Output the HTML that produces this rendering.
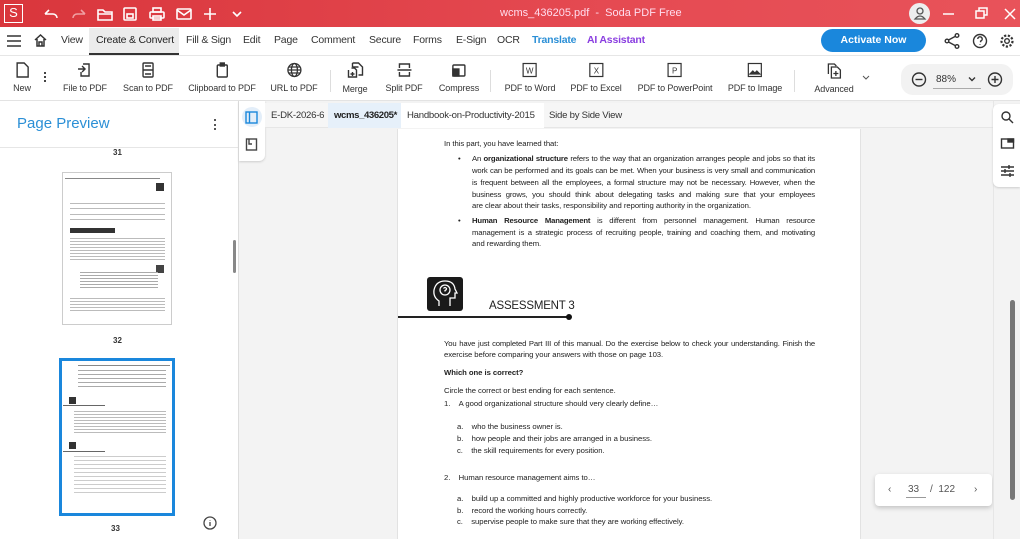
<!DOCTYPE html>
<html><head><meta charset="utf-8"><style>
*{margin:0;padding:0;box-sizing:border-box}
body{width:1020px;height:539px;overflow:hidden;font-family:"Liberation Sans",sans-serif;background:#fff;position:relative;color:#333}
.a{position:absolute}
.tb{left:0;top:0;width:1020px;height:27px;background:linear-gradient(90deg,#d9363c,#e54a52 60%,#e8535a)}
.menu span{position:absolute;top:34px;font-size:10.5px;color:#333;letter-spacing:-0.2px}
.tool{position:absolute;top:62px;text-align:center;font-size:9px;color:#333;transform:translateX(-50%);white-space:nowrap;letter-spacing:-0.1px}
.tool svg{display:block;margin:0 auto 5px}
.pt{position:absolute;font-family:"Liberation Sans",sans-serif;font-size:7.7px;color:#222;white-space:nowrap;letter-spacing:-0.05px}
.j{text-align:justify;text-align-last:justify;white-space:normal;letter-spacing:-0.15px}
.g{position:absolute;background:#bbb;height:1px}
.tab{position:absolute;top:110px;font-size:9.6px;color:#333;letter-spacing:-0.25px;white-space:nowrap}
</style></head><body>
<div class="a tb"></div>
<div class="a" style="left:4px;top:4px;width:19px;height:19px;border:1.5px solid #fff;color:#fff;font-size:13px;text-align:center;line-height:16px">S</div>
<svg class="a" style="left:42px;top:6px" width="210" height="16" fill="none" stroke="#fff" stroke-width="1.6">
<path d="M3 8 L7 4 M3 8 h8 a4 4 0 0 1 4 4"/>
<path d="M43 8 L39 4 M43 8 h-8 a4 4 0 0 0 -4 4" stroke="#f0a0a3"/>
<path d="M56 4 h5 l2 2 h7 v8 h-14 z M56 8 h14"/>
<rect x="82" y="2" width="12" height="12" rx="1"/><rect x="85" y="8" width="6" height="4"/>
<rect x="108" y="6" width="14" height="6" rx="1"/><rect x="111" y="2" width="8" height="4"/><rect x="111" y="10" width="8" height="4"/>
<rect x="135" y="3" width="14" height="10" rx="1"/><path d="M135 4 l7 5 l7 -5"/>
<path d="M168 2 v12 M162 8 h12"/>
<path d="M191 6 l4 4 l4 -4"/>
</svg>
<div class="a" style="left:500px;top:7px;font-size:11px;color:#fde">wcms_436205.pdf &nbsp;- &nbsp;Soda PDF Free</div>
<div class="a" style="left:909px;top:3px;width:21px;height:21px;border-radius:50%;background:#eee"></div>
<svg class="a" style="left:913px;top:6px" width="14" height="14" fill="none" stroke="#555" stroke-width="1.3"><circle cx="7" cy="5" r="3"/><path d="M2 13 q5 -6 10 0 z"/></svg>
<svg class="a" style="left:940px;top:6px" width="80" height="16" fill="none" stroke="#fff" stroke-width="1.5"><path d="M3 8 h11"/><rect x="36" y="5" width="8" height="7"/><path d="M39 5 v-3 h8 v7 h-3"/><path d="M65 3 l10 10 M75 3 l-10 10"/></svg>
<div class="menu">
<svg class="a" style="left:7px;top:35px" width="14" height="12" stroke="#333" stroke-width="1.5"><path d="M0 1h14M0 6h14M0 11h14"/></svg>
<svg class="a" style="left:33px;top:33px" width="15" height="15" fill="none" stroke="#333" stroke-width="1.5"><path d="M2 7 L7.5 2 L13 7 M4 6 v7 h7 v-7 M6 13 v-4 h3 v4"/></svg>
<span style="left:61px">View</span>
<div class="a" style="left:89px;top:28px;width:90px;height:27px;background:#ececec;border-bottom:2px solid #333"></div>
<span style="left:96px;color:#222">Create &amp; Convert</span>
<span style="left:186px">Fill &amp; Sign</span><span style="left:243px">Edit</span><span style="left:274px">Page</span>
<span style="left:311px">Comment</span><span style="left:369px">Secure</span><span style="left:413px">Forms</span>
<span style="left:456px">E-Sign</span><span style="left:497px">OCR</span>
<span style="left:532px;color:#2b8fd6;font-weight:bold">Translate</span>
<span style="left:587px;color:#8a3ee0;font-weight:bold">AI Assistant</span>
</div>
<div class="a" style="left:821px;top:29px;width:105px;height:23px;border-radius:12px;background:#1a87dc;color:#fff;font-size:10.5px;font-weight:bold;text-align:center;line-height:23px">Activate Now</div>
<svg class="a" style="left:944px;top:33px" width="75" height="16" fill="none" stroke="#333" stroke-width="1.4">
<circle cx="13" cy="2.5" r="1.8"/><circle cx="3" cy="8" r="1.8"/><circle cx="13" cy="13.5" r="1.8"/><path d="M4.5 7 L11.5 3.3 M4.5 9 L11.5 12.7"/>
<circle cx="36" cy="8" r="6.5"/><path d="M33.8 6 a2.2 2.2 0 1 1 2.8 2.1 v1.2 M36 11.3 v.6"/>
<circle cx="63" cy="8" r="2.3"/><circle cx="63" cy="8" r="5.5" stroke-dasharray="2.2 1.6" stroke-width="2.2"/>
</svg>
<div class="a" style="left:0;top:55px;width:1020px;height:1px;background:#e6e6e6"></div>
<div class="tool" style="left:22px"><svg width="14" height="16" fill="none" stroke="#333" stroke-width="1.4"><path d="M2 1h7l4 4v10H2z"/></svg>New</div>
<div class="a" style="left:44px;top:72px;width:2px;height:10px;border-left:2px dotted #444"></div>
<div class="tool" style="left:85px"><svg width="16" height="16" fill="none" stroke="#333" stroke-width="1.4"><path d="M6 2h6v12H4v-4M1 7h7M5 4l3 3-3 3"/></svg>File to PDF</div>
<div class="tool" style="left:148px"><svg width="16" height="16" fill="none" stroke="#333" stroke-width="1.4"><rect x="3" y="1" width="10" height="14" rx="1"/><path d="M3 8h10M5 4h6M5 12h6"/></svg>Scan to PDF</div>
<div class="tool" style="left:222px"><svg width="16" height="16" fill="none" stroke="#333" stroke-width="1.4"><rect x="3" y="3" width="10" height="12" rx="1"/><rect x="6" y="1" width="4" height="3" fill="#333"/></svg>Clipboard to PDF</div>
<div class="tool" style="left:294px"><svg width="16" height="16" fill="none" stroke="#333" stroke-width="1.3"><circle cx="8" cy="8" r="6.5"/><ellipse cx="8" cy="8" rx="3" ry="6.5"/><path d="M1.5 8h13M2.5 5h11M2.5 11h11"/></svg>URL to PDF</div>
<div class="a" style="left:330px;top:70px;width:1px;height:22px;background:#ddd"></div>
<div class="tool" style="left:355px"><svg width="18" height="17" fill="none" stroke="#333" stroke-width="1.4"><path d="M6 1h6l4 4v8h-4M6 1v4M12 5h-6"/><path d="M2 8v7h8v-7l-2-2H5M4 12h4M6 10v4"/></svg>Merge</div>
<div class="tool" style="left:404px"><svg width="16" height="16" fill="none" stroke="#333" stroke-width="1.4"><path d="M3 6V2h10v4M3 10v4h10v-4M1 8h14"/></svg>Split PDF</div>
<div class="tool" style="left:459px"><svg width="16" height="16" fill="none" stroke="#333" stroke-width="1.4"><rect x="2" y="3" width="12" height="11" rx="1"/><rect x="2" y="7" width="6" height="7" fill="#333"/></svg>Compress</div>
<div class="a" style="left:490px;top:70px;width:1px;height:22px;background:#ddd"></div>
<div class="tool" style="left:530px"><svg width="16" height="16" fill="none" stroke="#333" stroke-width="1.2"><rect x="1.5" y="1.5" width="13" height="13"/><text x="8" y="11.5" font-size="8" text-anchor="middle" fill="#333" stroke="none" font-family="Liberation Sans">W</text></svg>PDF to Word</div>
<div class="tool" style="left:596px"><svg width="16" height="16" fill="none" stroke="#333" stroke-width="1.2"><rect x="1.5" y="1.5" width="13" height="13"/><text x="8" y="11.5" font-size="8" text-anchor="middle" fill="#333" stroke="none" font-family="Liberation Sans">X</text></svg>PDF to Excel</div>
<div class="tool" style="left:675px"><svg width="16" height="16" fill="none" stroke="#333" stroke-width="1.2"><rect x="1.5" y="1.5" width="13" height="13"/><text x="8" y="11.5" font-size="8" text-anchor="middle" fill="#333" stroke="none" font-family="Liberation Sans">P</text></svg>PDF to PowerPoint</div>
<div class="tool" style="left:755px"><svg width="16" height="16" fill="none" stroke="#333" stroke-width="1.2"><rect x="1.5" y="1.5" width="13" height="13"/><path d="M3 12l3-3 2 2 2-2 3 3z" fill="#333"/></svg>PDF to Image</div>
<div class="a" style="left:794px;top:70px;width:1px;height:22px;background:#ddd"></div>
<div class="tool" style="left:834px"><svg width="17" height="17" fill="none" stroke="#333" stroke-width="1.3"><path d="M3 12V2h6l2 2M6 5h6l3 3v8H6z"/><path d="M10.5 9v5M8 11.5h5"/></svg>Advanced</div>
<svg class="a" style="left:862px;top:75px" width="8" height="6" fill="none" stroke="#555" stroke-width="1"><path d="M1 1l3 3 3-3"/></svg>
<div class="a" style="left:901px;top:64px;width:112px;height:31px;border-radius:12px;background:#f2f2f2"></div>
<svg class="a" style="left:911px;top:71px" width="96" height="17" fill="none" stroke="#333" stroke-width="1.4"><circle cx="8" cy="8.5" r="6.5"/><path d="M4.5 8.5h7"/><path d="M58 6.5l3 3 3-3"/><circle cx="84" cy="8.5" r="6.5"/><path d="M80.5 8.5h7M84 5v7"/></svg>
<div class="a" style="left:936px;top:74px;font-size:10px;color:#333">88%</div>
<div class="a" style="left:933px;top:88px;width:48px;height:1px;background:#aaa"></div>
<div class="a" style="left:0;top:100px;width:1020px;height:1px;background:#e3e3e3"></div>
<div class="a" style="left:17px;top:115px;font-size:15px;color:#2b8fd6">Page Preview</div>
<div class="a" style="left:214px;top:119px;width:2px;height:11px;border-left:2px dotted #555"></div>
<div class="a" style="left:0;top:147px;width:238px;height:1px;background:#e6e6e6"></div>
<div class="a" style="left:238px;top:101px;width:1px;height:438px;background:#ddd"></div>
<div class="a" style="left:113px;top:148px;font-size:8px;font-weight:bold;color:#333">31</div>
<div class="a" style="left:233px;top:240px;width:3px;height:33px;background:#888;border-radius:2px"></div>
<div class="a" style="left:62px;top:172px;width:110px;height:153px;background:#fff;border:1px solid #ccc"></div>
<div class="g" style="left:65px;top:178px;width:95px;background:#888"></div>
<div class="a" style="left:156px;top:183px;width:8px;height:8px;background:#333"></div>
<div class="g" style="left:70px;top:203px;width:95px"></div><div class="g" style="left:70px;top:208px;width:95px"></div><div class="g" style="left:70px;top:214px;width:95px"></div><div class="g" style="left:70px;top:219px;width:95px"></div>
<div class="a" style="left:70px;top:228px;width:45px;height:5px;background:#333"></div>
<div class="a" style="left:70px;top:238px;width:95px;height:22px;background:repeating-linear-gradient(#bbb 0 1px,#fff 1px 3px)"></div>
<div class="a" style="left:156px;top:265px;width:8px;height:8px;background:#444"></div>
<div class="a" style="left:80px;top:272px;width:78px;height:16px;background:repeating-linear-gradient(#aaa 0 1px,#fff 1px 3px)"></div>
<div class="a" style="left:70px;top:298px;width:95px;height:14px;background:repeating-linear-gradient(#bbb 0 1px,#fff 1px 3px)"></div>
<div class="a" style="left:113px;top:336px;font-size:8px;font-weight:bold;color:#333">32</div>
<div class="a" style="left:59px;top:358px;width:116px;height:158px;border:3px solid #1a87dc;background:#fff"></div>
<div class="g" style="left:78px;top:365px;width:92px;background:#888"></div>
<div class="a" style="left:78px;top:370px;width:88px;height:18px;background:repeating-linear-gradient(#aaa 0 1px,#fff 1px 4px)"></div>
<div class="a" style="left:69px;top:397px;width:7px;height:7px;background:#333"></div>
<div class="g" style="left:63px;top:405px;width:42px;background:#666"></div>
<div class="a" style="left:74px;top:411px;width:92px;height:22px;background:repeating-linear-gradient(#bbb 0 1px,#fff 1px 3px)"></div>
<div class="a" style="left:69px;top:442px;width:7px;height:7px;background:#333"></div>
<div class="g" style="left:63px;top:451px;width:42px;background:#666"></div>
<div class="a" style="left:74px;top:456px;width:92px;height:40px;background:repeating-linear-gradient(#ccc 0 1px,#fff 1px 4px)"></div>
<div class="a" style="left:111px;top:524px;font-size:8px;font-weight:bold;color:#333">33</div>
<svg class="a" style="left:203px;top:516px" width="14" height="14" fill="none" stroke="#444" stroke-width="1.3"><circle cx="7" cy="7" r="6"/><path d="M7 6v4M7 4v.5"/></svg>
<div class="a" style="left:239px;top:101px;width:754px;height:438px;background:#f3f3f3"></div>
<div class="a" style="left:239px;top:101px;width:26px;height:60px;background:#fff;border-radius:0 0 6px 0;box-shadow:0 1px 2px #ccc"></div>
<div class="a" style="left:242px;top:107px;width:20px;height:20px;border-radius:50%;background:#e3eef9"></div>
<svg class="a" style="left:245px;top:111px" width="14" height="40" fill="none" stroke-width="1.4"><rect x="1" y="1" width="11" height="11" stroke="#1a87dc"/><path d="M4.5 1v11" stroke="#1a87dc"/><rect x="1.5" y="28" width="10" height="11" stroke="#444"/><path d="M4 28v5h3" stroke="#444"/></svg>
<div class="a" style="left:265px;top:103px;width:728px;height:25px;background:#f6f6f6;border-bottom:1px solid #e6e6e6"></div>
<div class="a" style="left:328px;top:103px;width:73px;height:25px;background:#e6f0fa"></div>
<div class="tab" style="left:271px">E-DK-2026-6</div>
<div class="tab" style="left:334px;color:#222;font-weight:bold;letter-spacing:-0.4px">wcms_436205*</div>
<div class="a" style="left:401px;top:103px;width:143px;height:25px;background:#fff"></div>
<div class="tab" style="left:407px">Handbook-on-Productivity-2015</div>
<div class="tab" style="left:549px">Side by Side View</div>
<div class="a" style="left:397px;top:129px;width:464px;height:410px;background:#fff;border-left:1px solid #e2e2e2;border-right:1px solid #e2e2e2"></div>
<div class="pt" style="left:444px;top:139px">In this part, you have learned that:</div>
<div class="pt" style="left:458px;top:154px">•</div>
<div class="pt j" style="left:472px;top:154px;width:343px">An <b>organizational structure</b> refers to the way that an organization arranges people and jobs so that its</div>
<div class="pt j" style="left:472px;top:166px;width:343px">work can be performed and its goals can be met. When your business is very small and communication</div>
<div class="pt j" style="left:472px;top:178px;width:343px">is frequent between all the employees, a formal structure may not be necessary. However, when the</div>
<div class="pt j" style="left:472px;top:190px;width:343px">business grows, you should think about delegating tasks and making sure that your employees</div>
<div class="pt" style="left:472px;top:201px">are clear about their tasks, responsibility and reporting authority in the organization.</div>
<div class="pt" style="left:458px;top:216px">•</div>
<div class="pt j" style="left:472px;top:216px;width:343px"><b>Human Resource Management</b> is different from personnel management. Human resource</div>
<div class="pt j" style="left:472px;top:228px;width:343px">management is a strategic process of recruiting people, training and coaching them, and motivating</div>
<div class="pt" style="left:472px;top:239px">and rewarding them.</div>
<div class="a" style="left:427px;top:277px;width:36px;height:34px;background:#1a1a1a;border-radius:3px"></div>
<svg class="a" style="left:431px;top:279px" width="28" height="30" fill="none" stroke="#fff" stroke-width="1.3"><path d="M8 27 v-5 q-6 -4 -5 -11 q2 -9 11 -9 q9 0 10 8 l2 4 h-2 v5 h-5 v8"/><circle cx="14" cy="11" r="5"/><path d="M12.5 9.5 q1.5 -2 3 0 q0 1.5 -1.5 2 v1"/></svg>
<div class="a" style="left:489px;top:300px;font-size:11.5px;color:#222;letter-spacing:-0.2px">ASSESSMENT 3</div>
<div class="a" style="left:398px;top:316px;width:172px;height:2px;background:#222"></div>
<div class="a" style="left:566px;top:314px;width:6px;height:6px;border-radius:50%;background:#111"></div>
<div class="pt j" style="left:444px;top:339px;width:371px">You have just completed Part III of this manual. Do the exercise below to check your understanding. Finish the</div>
<div class="pt" style="left:444px;top:350px">exercise before comparing your answers with those on page 103.</div>
<div class="pt" style="left:444px;top:368px;font-weight:bold">Which one is correct?</div>
<div class="pt" style="left:444px;top:386px">Circle the correct or best ending for each sentence.</div>
<div class="pt" style="left:444px;top:399px">1. &nbsp;&nbsp;&nbsp;A good organizational structure should very clearly define…</div>
<div class="pt" style="left:457px;top:422px">a. &nbsp;&nbsp;&nbsp;who the business owner is.</div>
<div class="pt" style="left:457px;top:434px">b. &nbsp;&nbsp;&nbsp;how people and their jobs are arranged in a business.</div>
<div class="pt" style="left:457px;top:446px">c. &nbsp;&nbsp;&nbsp;the skill requirements for every position.</div>
<div class="pt" style="left:444px;top:473px">2. &nbsp;&nbsp;&nbsp;Human resource management aims to…</div>
<div class="pt" style="left:457px;top:494px">a. &nbsp;&nbsp;&nbsp;build up a committed and highly productive workforce for your business.</div>
<div class="pt" style="left:457px;top:506px">b. &nbsp;&nbsp;&nbsp;record the working hours correctly.</div>
<div class="pt" style="left:457px;top:517px">c. &nbsp;&nbsp;&nbsp;supervise people to make sure that they are working effectively.</div>
<div class="a" style="left:875px;top:474px;width:117px;height:32px;background:#fff;border-radius:4px;box-shadow:0 2px 5px rgba(0,0,0,.2)"></div>
<div class="a" style="left:888px;top:484px;font-size:10px;color:#555">‹</div>
<div class="a" style="left:908px;top:484px;font-size:10px;color:#555">33</div>
<div class="a" style="left:906px;top:497px;width:20px;height:1px;background:#999"></div>
<div class="a" style="left:930px;top:484px;font-size:10px;color:#555">/ &nbsp;122</div>
<div class="a" style="left:974px;top:484px;font-size:10px;color:#555">›</div>
<div class="a" style="left:993px;top:101px;width:27px;height:438px;background:#f3f3f3;border-left:1px solid #e6e6e6"></div>
<div class="a" style="left:993px;top:104px;width:27px;height:83px;background:#fff;border-radius:6px 0 0 6px;box-shadow:0 1px 2px #ccc"></div>
<svg class="a" style="left:1000px;top:110px" width="16" height="70" fill="none" stroke="#333" stroke-width="1.4"><circle cx="6" cy="6" r="4"/><path d="M9 9l4 4"/><rect x="1.5" y="29" width="12" height="9"/><rect x="8" y="29" width="5.5" height="3" fill="#333"/><path d="M1 57h13M1 61h13M1 65h13M9 55v4M5 59v4M10 63v4"/></svg>
<div class="a" style="left:1010px;top:300px;width:5px;height:200px;border-radius:3px;background:#777"></div>
</body></html>
